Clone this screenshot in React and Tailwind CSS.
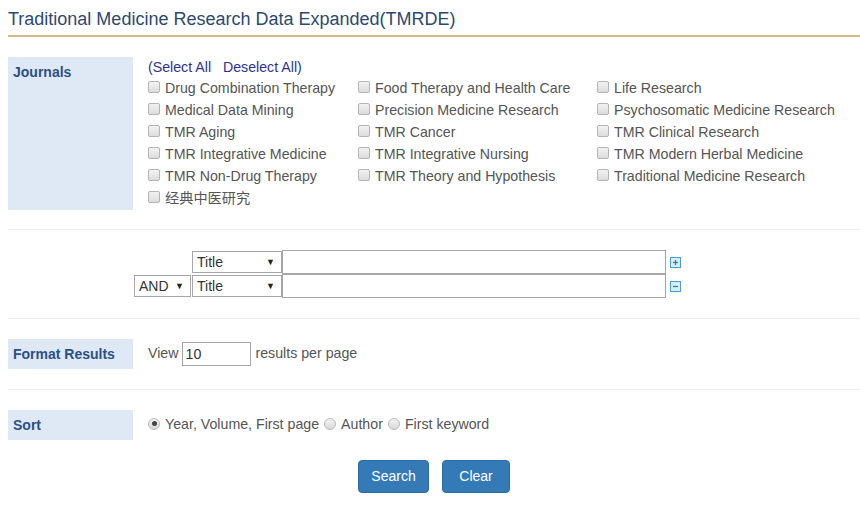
import React from "react";

const journals = [
  ["Drug Combination Therapy", "Food Therapy and Health Care", "Life Research"],
  ["Medical Data Mining", "Precision Medicine Research", "Psychosomatic Medicine Research"],
  ["TMR Aging", "TMR Cancer", "TMR Clinical Research"],
  ["TMR Integrative Medicine", "TMR Integrative Nursing", "TMR Modern Herbal Medicine"],
  ["TMR Non-Drug Therapy", "TMR Theory and Hypothesis", "Traditional Medicine Research"],
  ["经典中医研究"],
];

function Check({ label }) {
  return (
    <div className="flex items-center h-[22px]">
      <span className="w-[12px] h-[12px] mr-[5px] -mt-[4px] rounded-[2px] border border-[#b4b4b4] bg-gradient-to-b from-[#f2f2f2] to-[#dcdcdc] shrink-0" />
      <span className="text-[14.2px] text-[#555] whitespace-nowrap">{label}</span>
    </div>
  );
}

function Radio({ checked, label }) {
  return (
    <span className="inline-flex items-center">
      <span className="w-[12px] h-[12px] mr-[5px] -mt-[2px] rounded-full border border-[#b8b8b8] bg-gradient-to-b from-[#f4f4f4] to-[#d8d8d8] flex items-center justify-center shrink-0">
        {checked && <span className="w-[5px] h-[5px] rounded-full bg-[#444]" />}
      </span>
      <span>{label}</span>
    </span>
  );
}

function FakeSelect({ value, width }) {
  return (
    <div
      className={`${width} h-[22px] border border-[#a6a6a6] bg-white flex items-center justify-between pl-[4px] pr-[6px] text-[14px] text-[#333]`}
    >
      <span>{value}</span>
      <span className="text-[9px] leading-none text-[#222]">▼</span>
    </div>
  );
}

function PlusMinus({ minus }) {
  return (
    <svg width="11" height="11" viewBox="0 0 11 11" className="ml-[4px]">
      <rect x="0.5" y="0.5" width="10" height="10" fill="#d6ecf7" stroke="#4d9cc9" />
      <line x1="3" y1="5.5" x2="8" y2="5.5" stroke="#2f78aa" strokeWidth="1.2" />
      {!minus && <line x1="5.5" y1="3" x2="5.5" y2="8" stroke="#2f78aa" strokeWidth="1.2" />}
    </svg>
  );
}

function Label({ children, className = "" }) {
  return (
    <div className={`w-[125px] shrink-0 bg-[#dfe9f6] pl-[5px] text-[14px] font-bold text-[#2b5084] ${className}`}>
      {children}
    </div>
  );
}

export default function App() {
  return (
    <div className="w-[860px] h-[524px] bg-white pl-[8px] overflow-hidden" style={{ fontFamily: '"Liberation Sans", Arial, "Noto Sans CJK SC", sans-serif' }}>
      {/* Header */}
      <div className="pt-[8px]">
        <h1 className="text-[18px] leading-[22px] text-[#2c4a6f] font-normal">
          Traditional Medicine Research Data Expanded(TMRDE)
        </h1>
        <div className="mt-[5px] h-[2px] bg-[#d5bb8b]" />
      </div>

      {/* Journals */}
      <div className="flex mt-[20px]">
        <Label className="pt-[5px] leading-[20px]">Journals</Label>
        <div className="pl-[15px]">
          <div className="h-[21px] leading-[21px] text-[14.2px] text-[#2e3590]">
            (Select All&nbsp;&nbsp; Deselect All)
          </div>
          <div className="grid grid-cols-[210px_239px_1fr]">
            {journals.flat().map((j) => (
              <Check key={j} label={j} />
            ))}
          </div>
        </div>
      </div>

      <div className="mt-[19px] h-px bg-[#ececec]" />

      {/* Search rows */}
      <div className="mt-[20px] pl-[126px]">
        <div className="flex items-center h-[24px]">
          <div className="w-[58px]" />
          <FakeSelect value="Title" width="w-[90px]" />
          <div className="w-[384px] h-[24px] border border-[#a6a6a6]" />
          <PlusMinus />
        </div>
        <div className="flex items-center h-[24px]">
          <FakeSelect value="AND" width="w-[57px] mr-[1px]" />
          <FakeSelect value="Title" width="w-[90px]" />
          <div className="w-[384px] h-[24px] border border-[#a6a6a6]" />
          <PlusMinus minus />
        </div>
      </div>

      <div className="mt-[20px] h-px bg-[#ececec]" />

      {/* Format Results */}
      <div className="flex items-center mt-[20px]">
        <Label className="h-[30px] leading-[30px]">Format Results</Label>
        <div className="pl-[15px] flex items-center text-[14.2px] text-[#555]">
          <span>View</span>
          <div className="ml-[3px] w-[69px] h-[24px] border border-[#a6a6a6] pl-[3px] leading-[22px] text-[#333]">10</div>
          <span className="ml-[5px]">results per page</span>
        </div>
      </div>

      <div className="mt-[20px] h-px bg-[#ececec]" />

      {/* Sort */}
      <div className="flex items-center mt-[20px]">
        <Label className="h-[30px] leading-[30px]">Sort</Label>
        <div className="pl-[15px] flex items-center gap-[5px] text-[14.2px] text-[#555]">
          <Radio checked label="Year, Volume, First page" />
          <Radio label="Author" />
          <Radio label="First keyword" />
        </div>
      </div>

      {/* Buttons */}
      <div className="mt-[20px] flex justify-center gap-[13px]">
        <button className="w-[71px] h-[33px] rounded-[4px] bg-[#337ab7] border border-[#2e6da4] text-white text-[14px]">
          Search
        </button>
        <button className="w-[68px] h-[33px] rounded-[4px] bg-[#337ab7] border border-[#2e6da4] text-white text-[14px]">
          Clear
        </button>
      </div>
    </div>
  );
}
